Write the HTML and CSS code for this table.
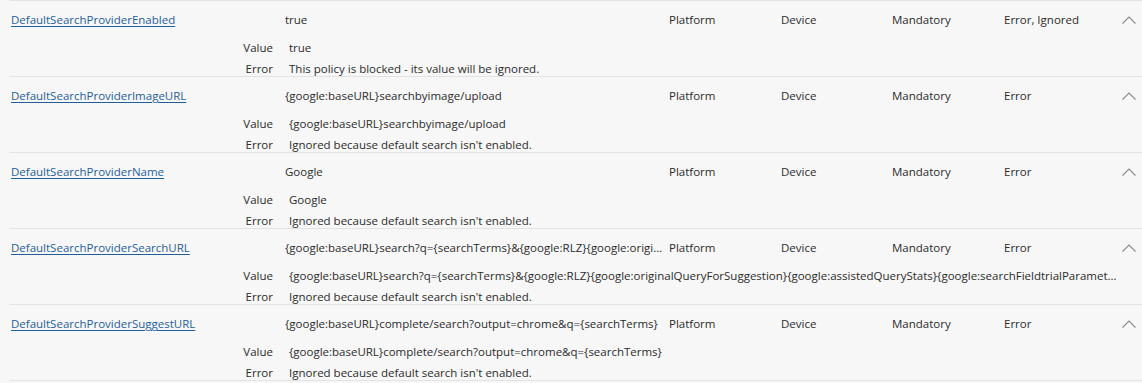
FILE: index.html
```html
<!DOCTYPE html>
<html lang="en">
<head>
<meta charset="utf-8">
<title>Policies</title>
<link rel="stylesheet" href="styles.css">
</head>
<body>
<div class="list">
  <div class="policy">
    <div class="main">
      <a class="name" href="#">DefaultSearchProviderEnabled</a>
      <div class="cell val">true</div>
      <div class="cell">Platform</div>
      <div class="cell">Device</div>
      <div class="cell">Mandatory</div>
      <div class="cell">Error, Ignored</div>
      <span class="chev"><svg width="14" height="8" viewBox="0 0 14 8"><path d="M0.5 7.5 L7 1 L13.5 7.5" fill="none" stroke="#8a8a8a" stroke-width="1.1"/></svg></span>
    </div>
    <div class="details">
      <div class="drow"><span class="lbl">Value</span><span class="dval">true</span></div>
      <div class="drow"><span class="lbl">Error</span><span class="dval">This policy is blocked - its value will be ignored.</span></div>
    </div>
  </div>
  <div class="policy">
    <div class="main">
      <a class="name" href="#">DefaultSearchProviderImageURL</a>
      <div class="cell val">{google:baseURL}searchbyimage/upload</div>
      <div class="cell">Platform</div>
      <div class="cell">Device</div>
      <div class="cell">Mandatory</div>
      <div class="cell">Error</div>
      <span class="chev"><svg width="14" height="8" viewBox="0 0 14 8"><path d="M0.5 7.5 L7 1 L13.5 7.5" fill="none" stroke="#8a8a8a" stroke-width="1.1"/></svg></span>
    </div>
    <div class="details">
      <div class="drow"><span class="lbl">Value</span><span class="dval">{google:baseURL}searchbyimage/upload</span></div>
      <div class="drow"><span class="lbl">Error</span><span class="dval">Ignored because default search isn't enabled.</span></div>
    </div>
  </div>
  <div class="policy">
    <div class="main">
      <a class="name" href="#">DefaultSearchProviderName</a>
      <div class="cell val">Google</div>
      <div class="cell">Platform</div>
      <div class="cell">Device</div>
      <div class="cell">Mandatory</div>
      <div class="cell">Error</div>
      <span class="chev"><svg width="14" height="8" viewBox="0 0 14 8"><path d="M0.5 7.5 L7 1 L13.5 7.5" fill="none" stroke="#8a8a8a" stroke-width="1.1"/></svg></span>
    </div>
    <div class="details">
      <div class="drow"><span class="lbl">Value</span><span class="dval">Google</span></div>
      <div class="drow"><span class="lbl">Error</span><span class="dval">Ignored because default search isn't enabled.</span></div>
    </div>
  </div>
  <div class="policy">
    <div class="main">
      <a class="name" href="#">DefaultSearchProviderSearchURL</a>
      <div class="cell val">{google:baseURL}search?q={searchTerms}&amp;{google:RLZ}{google:origin...</div>
      <div class="cell">Platform</div>
      <div class="cell">Device</div>
      <div class="cell">Mandatory</div>
      <div class="cell">Error</div>
      <span class="chev"><svg width="14" height="8" viewBox="0 0 14 8"><path d="M0.5 7.5 L7 1 L13.5 7.5" fill="none" stroke="#8a8a8a" stroke-width="1.1"/></svg></span>
    </div>
    <div class="details">
      <div class="drow"><span class="lbl">Value</span><span class="dval">{google:baseURL}search?q={searchTerms}&amp;{google:RLZ}{google:originalQueryForSuggestion}{google:assistedQueryStats}{google:searchFieldtrialParamete...</span></div>
      <div class="drow"><span class="lbl">Error</span><span class="dval">Ignored because default search isn't enabled.</span></div>
    </div>
  </div>
  <div class="policy">
    <div class="main">
      <a class="name" href="#">DefaultSearchProviderSuggestURL</a>
      <div class="cell val">{google:baseURL}complete/search?output=chrome&amp;q={searchTerms}</div>
      <div class="cell">Platform</div>
      <div class="cell">Device</div>
      <div class="cell">Mandatory</div>
      <div class="cell">Error</div>
      <span class="chev"><svg width="14" height="8" viewBox="0 0 14 8"><path d="M0.5 7.5 L7 1 L13.5 7.5" fill="none" stroke="#8a8a8a" stroke-width="1.1"/></svg></span>
    </div>
    <div class="details">
      <div class="drow"><span class="lbl">Value</span><span class="dval">{google:baseURL}complete/search?output=chrome&amp;q={searchTerms}</span></div>
      <div class="drow"><span class="lbl">Error</span><span class="dval">Ignored because default search isn't enabled.</span></div>
    </div>
  </div>
</div>
</body>
</html>
```

FILE: styles.css
```css
html, body {
  margin: 0;
  padding: 0;
  background: #f7f7f7;
}
body {
  font-family: "Open Sans", "Noto Sans", sans-serif;
  font-size: 11.5px;
  line-height: 16px;
  color: #2b2b2b;
  overflow: hidden;
}
.list {
  margin-left: 10px;
  border-bottom: 1px solid #e3e3e3;
}
.policy {
  border-top: 1px solid #e3e3e3;
  padding-top: 11px;
}
.main {
  display: grid;
  grid-template-columns: 275px 384px 112px 111px 112px 1fr 20px;
  align-items: center;
  padding-right: 6px;
}
.name {
  color: #1f5e9b;
  text-decoration: underline;
  text-underline-offset: 2px;
  padding-left: 1px;
  justify-self: start;
}
.cell {
  white-space: nowrap;
  overflow: hidden;
  text-overflow: ellipsis;
}
.chev {
  display: flex;
  justify-content: flex-end;
  align-items: center;
  height: 16px;
}
.details {
  margin-top: 12px;
  display: flex;
  flex-direction: column;
  gap: 6px;
}
.drow {
  display: grid;
  grid-template-columns: 263px 1fr;
  column-gap: 16px;
  padding-right: 20px;
  line-height: 15px;
}
.lbl {
  text-align: right;
}
.dval {
  white-space: nowrap;
  overflow: hidden;
  text-overflow: ellipsis;
}
```
